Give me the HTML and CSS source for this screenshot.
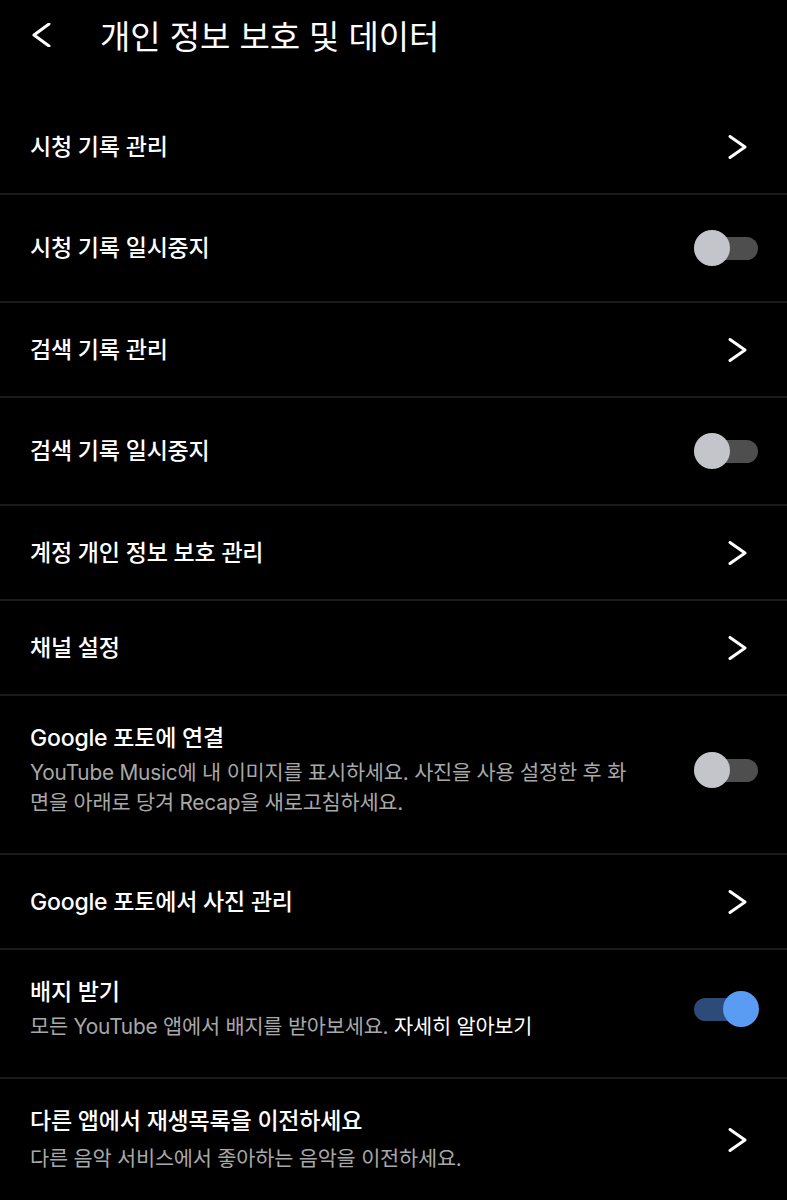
FILE: index.html
```html
<!DOCTYPE html>
<html lang="ko">
<head>
    <meta charset="UTF-8">
    <meta name="viewport" content="width=device-width, initial-scale=1.0">
    <title>개인 정보 보호 및 데이터</title>
    <link rel="stylesheet" href="styles.css">
</head>
<body>
    <div class="header">
        <svg class="back" width="24" height="24" viewBox="0 0 24 24">
            <path d="M19 1 L4 12 L19 23" fill="none" stroke="#fff" stroke-width="3" stroke-linecap="round" stroke-linejoin="round"/>
        </svg>
        <h1>개인 정보 보호 및 데이터</h1>
    </div>

    <div class="list">
        <div class="row">
            <div class="text"><div class="title">시청 기록 관리</div></div>
            <svg class="chev" width="30" height="24" viewBox="0 0 30 24"><path d="M2 1.5 L17 12 L2 22.5" fill="none" stroke="#fff" stroke-width="3" stroke-linecap="round" stroke-linejoin="round"/></svg>
        </div>
        <div class="row tall">
            <div class="text"><div class="title">시청 기록 일시중지</div></div>
            <div class="switch"><span class="knob"></span></div>
        </div>
        <div class="row">
            <div class="text"><div class="title">검색 기록 관리</div></div>
            <svg class="chev" width="30" height="24" viewBox="0 0 30 24"><path d="M2 1.5 L17 12 L2 22.5" fill="none" stroke="#fff" stroke-width="3" stroke-linecap="round" stroke-linejoin="round"/></svg>
        </div>
        <div class="row tall">
            <div class="text"><div class="title">검색 기록 일시중지</div></div>
            <div class="switch"><span class="knob"></span></div>
        </div>
        <div class="row">
            <div class="text"><div class="title">계정 개인 정보 보호 관리</div></div>
            <svg class="chev" width="30" height="24" viewBox="0 0 30 24"><path d="M2 1.5 L17 12 L2 22.5" fill="none" stroke="#fff" stroke-width="3" stroke-linecap="round" stroke-linejoin="round"/></svg>
        </div>
        <div class="row">
            <div class="text"><div class="title">채널 설정</div></div>
            <svg class="chev" width="30" height="24" viewBox="0 0 30 24"><path d="M2 1.5 L17 12 L2 22.5" fill="none" stroke="#fff" stroke-width="3" stroke-linecap="round" stroke-linejoin="round"/></svg>
        </div>
        <div class="row multi">
            <div class="text">
                <div class="title">Google 포토에 연결</div>
                <div class="sub narrow">YouTube Music에 내 이미지를 표시하세요. 사진을 사용 설정한 후 화면을 아래로 당겨 Recap을 새로고침하세요.</div>
            </div>
            <div class="switch"><span class="knob"></span></div>
        </div>
        <div class="row">
            <div class="text"><div class="title">Google 포토에서 사진 관리</div></div>
            <svg class="chev" width="30" height="24" viewBox="0 0 30 24"><path d="M2 1.5 L17 12 L2 22.5" fill="none" stroke="#fff" stroke-width="3" stroke-linecap="round" stroke-linejoin="round"/></svg>
        </div>
        <div class="row multi">
            <div class="text">
                <div class="title">배지 받기</div>
                <div class="sub">모든 YouTube 앱에서 배지를 받아보세요. <span class="link">자세히 알아보기</span></div>
            </div>
            <div class="switch on"><span class="knob"></span></div>
        </div>
        <div class="row multi last">
            <div class="text">
                <div class="title">다른 앱에서 재생목록을 이전하세요</div>
                <div class="sub gap">다른 음악 서비스에서 좋아하는 음악을 이전하세요.</div>
            </div>
            <svg class="chev" width="30" height="24" viewBox="0 0 30 24"><path d="M2 1.5 L17 12 L2 22.5" fill="none" stroke="#fff" stroke-width="3" stroke-linecap="round" stroke-linejoin="round"/></svg>
        </div>
    </div>
</body>
</html>
```

FILE: styles.css
```css
body{
    margin: 0;
    background-color: #000;
    color: #fff;
    font-family: Inter, "Noto Sans CJK KR", sans-serif;
}
.header{
    display: flex;
    align-items: center;
    height: 70px;
    padding: 0 30px;
    margin-bottom: 30px;
}
.back{
    flex: none;
}
h1{
    margin: 0 0 0 46px;
    font-size: 33px;
    font-weight: 400;
    letter-spacing: -0.1px;
}
.row{
    display: flex;
    align-items: center;
    min-height: 93px;
    padding: 0 29px 0 30px;
    border-bottom: 2px solid #1b1b1b;
}
.row.tall{
    min-height: 106px;
}
.row.multi{
    padding-top: 26px;
    padding-bottom: 35px;
    min-height: 0;
}
.row.last{
    border-bottom: none;
}
.text{
    flex: 1;
    min-width: 0;
}
.title{
    font-size: 23px;
    font-weight: 500;
    line-height: 32px;
    letter-spacing: -0.2px;
}
.sub{
    margin-top: 4px;
    font-size: 20.8px;
    line-height: 30px;
    color: #a8a8a8;
    padding-right: 12px;
    letter-spacing: -0.2px;
}
.sub.narrow{
    padding-right: 56px;
}
.sub.gap{
    margin-top: 7px;
}
.link{
    color: #fff;
}
.chev{
    flex: none;
}
.switch{
    flex: none;
    position: relative;
    width: 64px;
    height: 23px;
    border-radius: 12px;
    background-color: #4e4e4e;
}
.knob{
    position: absolute;
    left: 0;
    top: -7px;
    width: 36px;
    height: 36px;
    border-radius: 50%;
    background-color: #c4c5ca;
}
.switch.on{
    background-color: #2c4b78;
}
.switch.on .knob{
    left: 29px;
    background-color: #5a9cf4;
}
```
